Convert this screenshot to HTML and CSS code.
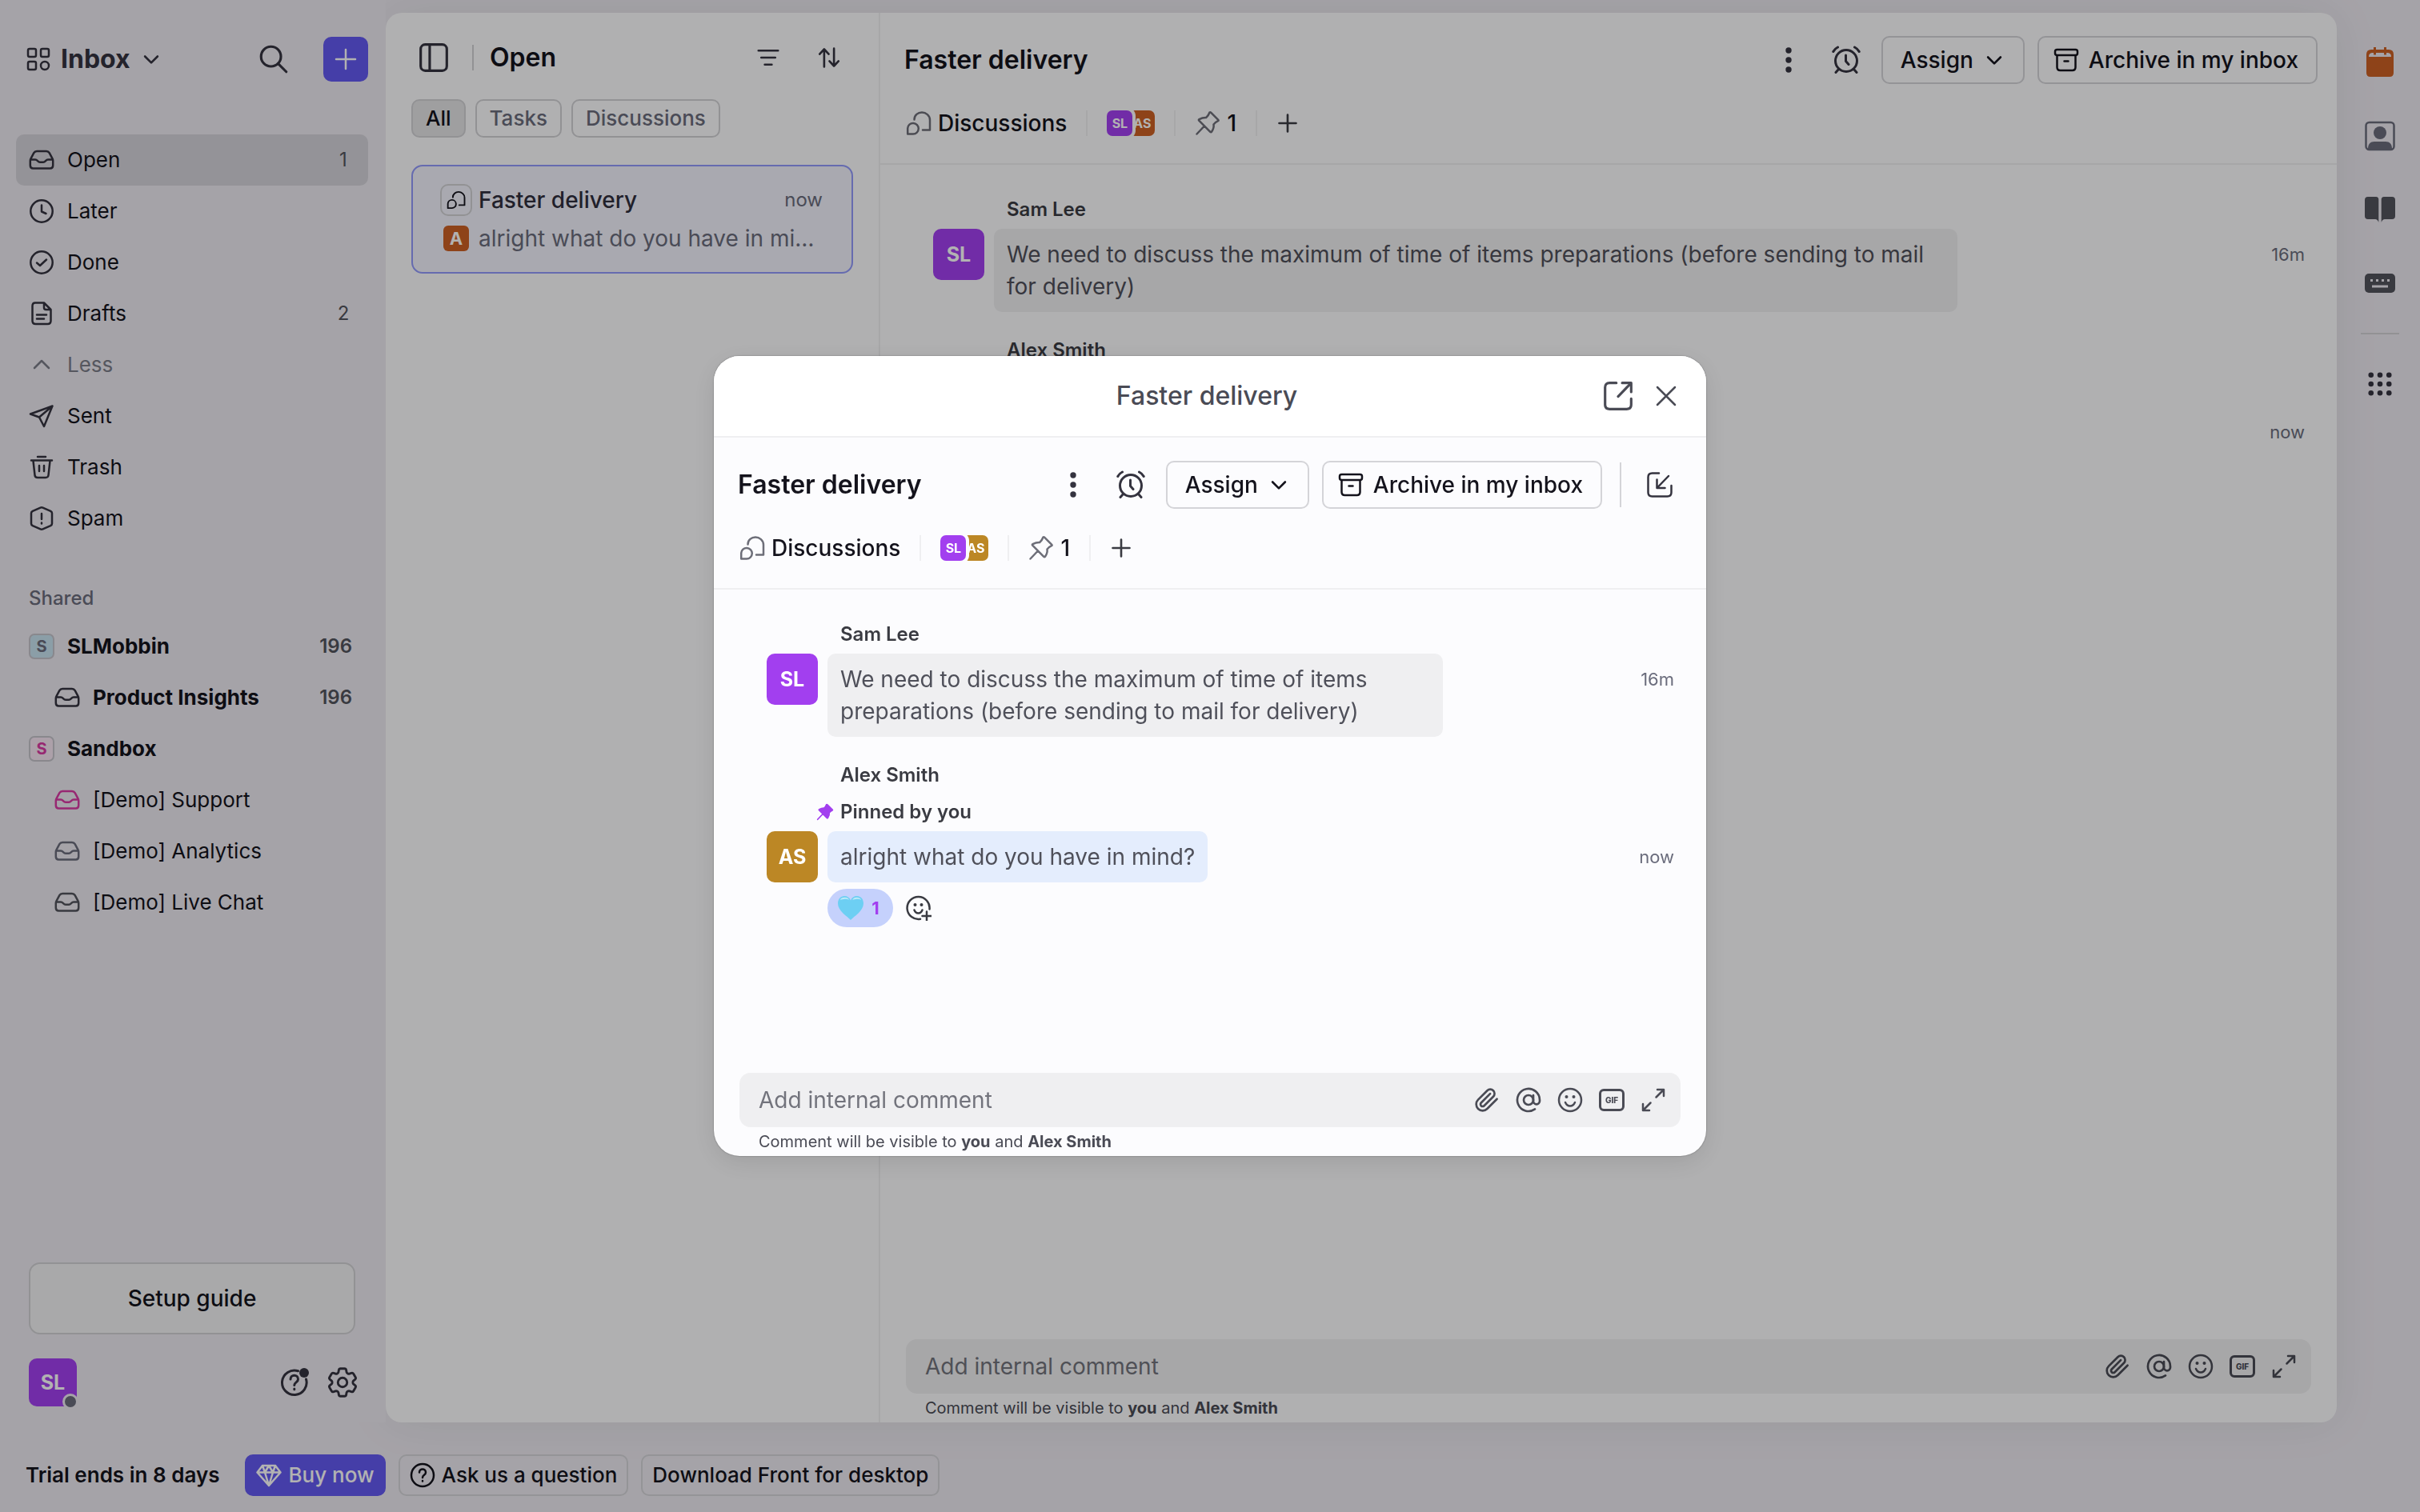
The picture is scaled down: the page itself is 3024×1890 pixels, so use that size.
FILE: index.html
```html
<!DOCTYPE html>
<html lang="en">
<head>
    <meta charset="UTF-8">
    <meta name="viewport" content="width=device-width, initial-scale=1.0">
    <title>Faster delivery</title>
    <link rel="stylesheet" href="styles.css">
</head>
<body>
    <!-- icon sprite -->
    <svg class="sprite" aria-hidden="true">
        <symbol id="i-apps" viewBox="0 0 32 32"><rect x="3" y="3" width="10" height="10" rx="2"/><rect x="19" y="3" width="10" height="10" rx="2"/><rect x="3" y="19" width="10" height="10" rx="2"/><circle cx="24" cy="24" r="5"/></symbol>
        <symbol id="i-down" viewBox="0 0 32 32"><path d="M7 12l9 9 9-9"/></symbol>
        <symbol id="i-up" viewBox="0 0 32 32"><path d="M7 20l9-9 9 9"/></symbol>
        <symbol id="i-search" viewBox="0 0 32 32"><circle cx="13" cy="13" r="11"/><path d="M21 21l9 9"/></symbol>
        <symbol id="i-plus" viewBox="0 0 32 32"><path d="M16 4v24M4 16h24"/></symbol>
        <symbol id="i-inbox" viewBox="0 0 32 32"><path d="M10 5h12q2.500 0 3.700 2.200l3.600 6.600q.9 1.600.9 3v6q0 3.700-3.500 3.700H5.300q-3.500 0-3.500-3.700v-6q0-1.400.9-3l3.600-6.600Q7.500 5 10 5zM2 15.500h6c3 0 3 3.200 6 3.200h4c3 0 3-3.200 6-3.200h6"/></symbol>
        <symbol id="i-clock" viewBox="0 0 32 32"><circle cx="16" cy="16" r="13.700"/><path d="M16 8.500V16.500l5.500 2.500"/></symbol>
        <symbol id="i-check" viewBox="0 0 32 32"><circle cx="16" cy="16" r="13.700"/><path d="M10 16.500l4 3.500 8-7.500"/></symbol>
        <symbol id="i-draft" viewBox="0 0 32 32"><path d="M8 2.500h11l8.500 8.500v14q0 4-4 4h-15q-4 0-4-4v-18.500q0-4 3.500-4zM19 3v5.500q0 2.500 2.500 2.500H27M10 17.500h12M10 22.500h9"/></symbol>
        <symbol id="i-send" viewBox="0 0 32 32"><path d="M2 13.500L29.500 3.500 19 29l-6-11.500zM13 17.500L29.500 3.500"/></symbol>
        <symbol id="i-trash" viewBox="0 0 32 32"><path d="M11 3h10M3 7.500h26M5.500 8l2 18q.3 3 3.500 3h10q3.200 0 3.500-3l2-18M13 14v7M19 14v7"/></symbol>
        <symbol id="i-spam" viewBox="0 0 32 32"><path d="M14.500 2.600q1.500-.7 3 0l9.700 4.300q1.800.9 1.800 2.600v13q0 1.700-1.800 2.600l-9.700 4.300q-1.500.7-3 0l-9.700-4.300Q3 24.200 3 22.500v-13q0-1.700 1.800-2.600zM16 10v7M16 21.500v1"/></symbol>
        <symbol id="i-panel" viewBox="0 0 32 32"><rect x="1.500" y="1.500" width="29" height="29" rx="5"/><path d="M11.500 2v28"/></symbol>
        <symbol id="i-filter" viewBox="0 0 32 32"><path d="M2 6h28M6 16h20M11 26h10"/></symbol>
        <symbol id="i-sort" viewBox="0 0 32 32"><path d="M9 29V4M2.500 11L9 4l6.500 7M23 3v25M16.500 21l6.500 7 6.500-7"/></symbol>
        <symbol id="i-chat" viewBox="0 0 32 32"><path d="M10.500 11.500C10.500 6 15 2.500 20 2.500S30 6.500 30 12v12.500h-9M2.200 29.500V22.300a6.800 6.800 0 1 1 6.800 7.200z"/></symbol>
        <symbol id="i-dots" viewBox="0 0 32 32"><g class="solid"><circle cx="16" cy="4" r="3.700"/><circle cx="16" cy="16" r="3.700"/><circle cx="16" cy="28" r="3.700"/></g></symbol>
        <symbol id="i-alarm" viewBox="0 0 36 36"><circle cx="18" cy="19" r="13.500"/><path d="M17.500 12v7.500l3.500 4M8.500 29.500L5 33.500M27.500 29.500l3.500 4M1.800 7.500Q3.500 4 7.500 2M34.200 7.500Q32.500 4 28.500 2"/></symbol>
        <symbol id="i-archive" viewBox="0 0 32 32"><rect x="2" y="3" width="28" height="7" rx="2.500"/><path d="M4.500 10.500V25q0 4 4 4h15q4 0 4-4V10.500M13.500 17.500h5"/></symbol>
        <symbol id="i-pin" viewBox="0 0 32 32"><path d="M18.500 2.500q.8-.6 1.600.2l9.200 9.200q.8.800-.3 1.300-3.500 1.800-5.500 4.300.8 4.500-2.500 9.200-.8 1-1.700.1L5.200 12.700q-.8-.9.300-1.600 4.200-2.400 8.700-2.200 2.800-2.200 4.300-6.400zM11.500 20L2.500 29.500"/></symbol>
        <symbol id="i-open" viewBox="0 0 32 32"><path d="M14 1.500H6.500Q1.500 1.500 1.500 6.500v19q0 5 5 5h19q5 0 5-5V19M20.500 1.500h10v10M30 2L16 16.500"/></symbol>
        <symbol id="i-close" viewBox="0 0 32 32"><path d="M5 5l22 22M27 5L5 27"/></symbol>
        <symbol id="i-pull" viewBox="0 0 32 32"><path d="M15 1.500H6.500q-5 0-5 5v19q0 5 5 5h19q5 0 5-5V17M27 5L13 19.500M12.500 9.500v10.500h10"/></symbol>
        <symbol id="i-clip" viewBox="0 0 24 24"><path d="m21.440 11.050-9.190 9.190a6 6 0 0 1-8.490-8.490l8.570-8.570A4 4 0 1 1 18 8.840l-8.590 8.570a2 2 0 0 1-2.830-2.830l8.490-8.480"/></symbol>
        <symbol id="i-at" viewBox="0 0 24 24"><circle cx="12" cy="12" r="4.500"/><path d="M16.500 7.500v5.500a2.800 2.800 0 0 0 6 0v-1a10.500 10.500 0 1 0-4.500 8.600"/></symbol>
        <symbol id="i-smile" viewBox="0 0 32 32"><circle cx="16" cy="16" r="14"/><path d="M10 19q2 4.500 6 4.500t6-4.500"/><g class="solid"><circle cx="11.500" cy="12" r="2"/><circle cx="20.500" cy="12" r="2"/></g></symbol>
        <symbol id="i-expand" viewBox="0 0 32 32"><path d="M21 3h8v8M29 3l-9.500 9.500M3 21v8h8M3 29l9.500-9.500"/></symbol>
        <symbol id="i-react" viewBox="0 0 32 32"><path d="M29.500 17.500A14 14 0 1 0 18 29.800M10.500 18.500q1.500 4 5 4t5-4M26 20.500v11M20.500 26h11"/><g class="solid"><circle cx="11.500" cy="12" r="2"/><circle cx="19.500" cy="12" r="2"/></g></symbol>
        <symbol id="i-heart" viewBox="1 1 30 28"><path fill="#6dcff3" d="M16 29C12 24.500 1 18.500 1 9.500 1 4.500 4.500 1 8.700 1 12 1 14.700 2.800 16 6c1.300-3.200 4-5 7.300-5C27.500 1 31 4.500 31 9.500c0 9-11 15-15 19.500z"/><path fill="#bfeaf8" d="M3.500 5.500Q5 2.500 9 2.500t5 3q-2.500-1.500-5-1t-5.500 1zM18 5.500q1.500-3 5-3t5.500 3q-3-1.500-5.500-1t-5 1z"/></symbol>
        <symbol id="i-help" viewBox="0 0 32 32"><circle cx="16" cy="16" r="14"/><path d="M12 12.500c0-5.500 8-5.500 8 0 0 3.500-4 3.200-4 6.500M16 23v.5"/></symbol>
        <symbol id="i-help-dot" viewBox="0 0 36 36"><path d="M22.500 3.700A15.300 15.300 0 1 0 32.500 14M13 14c0-6.500 9.500-6.500 9.500 0 0 4-4.700 3.700-4.700 7.500M17.800 26v.7"/><circle class="solid" cx="30" cy="6" r="6"/></symbol>
        <symbol id="i-gear" viewBox="0 0 24 24"><circle cx="12" cy="12" r="3"/><path d="M9.594 3.940c.090-.542.560-.940 1.110-.940h2.593c.550 0 1.020.398 1.110.940l.213 1.281c.063.374.313.686.645.870.074.040.147.083.220.127.325.196.720.257 1.075.124l1.217-.456a1.125 1.125 0 0 1 1.370.490l1.296 2.247a1.125 1.125 0 0 1-.260 1.431l-1.003.827c-.293.241-.438.613-.430.992a7.723 7.723 0 0 1 0 .255c-.008.378.137.750.430.991l1.004.827c.424.350.534.955.260 1.430l-1.298 2.247a1.125 1.125 0 0 1-1.369.491l-1.217-.456c-.355-.133-.750-.072-1.076.124a6.470 6.470 0 0 1-.220.128c-.331.183-.581.495-.644.869l-.213 1.281c-.090.543-.560.940-1.110.940h-2.594c-.550 0-1.019-.398-1.110-.940l-.213-1.281c-.062-.374-.312-.686-.644-.870a6.520 6.520 0 0 1-.220-.127c-.325-.196-.720-.257-1.076-.124l-1.217.456a1.125 1.125 0 0 1-1.369-.490l-1.297-2.247a1.125 1.125 0 0 1 .260-1.431l1.004-.827c.292-.240.437-.613.430-.991a6.932 6.932 0 0 1 0-.255c.007-.380-.138-.751-.430-.992l-1.004-.827a1.125 1.125 0 0 1-.260-1.430l1.297-2.247a1.125 1.125 0 0 1 1.370-.491l1.216.456c.356.133.751.072 1.076-.124.072-.044.146-.086.220-.128.332-.183.582-.495.644-.869z"/></symbol>
        <symbol id="i-gem" viewBox="0 0 32 32"><path d="M8 4h16l6.500 8.500L16 29 1.500 12.500zM1.500 12.500h29M8 4l3 8.500L16 29l5-16.500L24 4M11 12.500L16 4l5 8.500"/></symbol>
        <symbol id="i-calendar" viewBox="0 0 38 38"><path class="solid" d="M8 3h3V0h3v3h10V0h3v3h3q6 0 6 6v23q0 5-5 5H7q-5 0-5-5V9q0-6 6-6z"/><path class="hole" d="M5 12q0-5 5-5h1v2.500h3V7h10v2.500h3V7h1q5 0 5 5z"/></symbol>
        <symbol id="i-contact" viewBox="0 0 38 38"><rect x="1.500" y="2" width="35" height="34" rx="4"/><g class="solid"><circle cx="19" cy="15" r="8"/><path d="M4 35c0-6 3-9 8-9h14c5 0 8 3 8 9z"/></g></symbol>
        <symbol id="i-book" viewBox="0 0 38 38"><path class="solid" d="M4 3h10q3.300 0 3.300 3.500V35Q16 31 13 31H4q-4 0-4-4V7q0-4 4-4zM34 3H24q-3.300 0-3.300 3.500V35Q22 31 25 31h9q4 0 4-4V7q0-4-4-4z"/></symbol>
        <symbol id="i-keyboard" viewBox="0 0 38 38"><rect class="solid" y="7" width="38" height="24" rx="5"/><path class="hole" d="M7 14h3v3H7zM14 14h3v3h-3zM21 14h3v3h-3zM28 14h3v3h-3zM9 21.500h20v3H9z"/></symbol>
        <symbol id="i-grid" viewBox="0 0 32 32"><g class="solid"><circle cx="4" cy="4" r="3.500"/><circle cx="16" cy="4" r="3.500"/><circle cx="28" cy="4" r="3.500"/><circle cx="4" cy="16" r="3.500"/><circle cx="16" cy="16" r="3.500"/><circle cx="28" cy="16" r="3.500"/><circle cx="4" cy="28" r="3.500"/><circle cx="16" cy="28" r="3.500"/><circle cx="28" cy="28" r="3.500"/></g></symbol>
    </svg>

    <div class="app">
        <!-- sidebar -->
        <aside class="sidebar">
            <div class="sidebar-head">
                <button class="switcher"><svg class="icon"><use href="#i-apps"/></svg>Inbox<svg class="icon icon-sm"><use href="#i-down"/></svg></button>
                <button class="icon-btn" aria-label="Search"><svg class="icon icon-lg"><use href="#i-search"/></svg></button>
                <button class="compose" aria-label="Compose"><svg class="icon"><use href="#i-plus"/></svg></button>
            </div>
            <nav class="nav">
                <a class="nav-item active" href="#"><svg class="icon"><use href="#i-inbox"/></svg>Open<span class="count">1</span></a>
                <a class="nav-item" href="#"><svg class="icon"><use href="#i-clock"/></svg>Later</a>
                <a class="nav-item" href="#"><svg class="icon"><use href="#i-check"/></svg>Done</a>
                <a class="nav-item" href="#"><svg class="icon"><use href="#i-draft"/></svg>Drafts<span class="count">2</span></a>
                <button class="nav-item less"><svg class="icon"><use href="#i-up"/></svg>Less</button>
                <a class="nav-item" href="#"><svg class="icon"><use href="#i-send"/></svg>Sent</a>
                <a class="nav-item" href="#"><svg class="icon"><use href="#i-trash"/></svg>Trash</a>
                <a class="nav-item" href="#"><svg class="icon"><use href="#i-spam"/></svg>Spam</a>
                <h2 class="nav-label">Shared</h2>
                <a class="nav-item strong" href="#"><span class="badge badge-blue">S</span>SLMobbin<span class="count">196</span></a>
                <a class="nav-item strong child" href="#"><svg class="icon"><use href="#i-inbox"/></svg>Product Insights<span class="count">196</span></a>
                <a class="nav-item strong" href="#"><span class="badge badge-pink">S</span>Sandbox</a>
                <a class="nav-item child" href="#"><svg class="icon pink"><use href="#i-inbox"/></svg>[Demo] Support</a>
                <a class="nav-item child" href="#"><svg class="icon slate"><use href="#i-inbox"/></svg>[Demo] Analytics</a>
                <a class="nav-item child" href="#"><svg class="icon gray"><use href="#i-inbox"/></svg>[Demo] Live Chat</a>
            </nav>
            <div class="sidebar-foot">
                <button class="setup">Setup guide</button>
                <div class="account">
                    <span class="avatar avatar-me">SL<i class="status"></i></span>
                    <button class="icon-btn foot-btn" aria-label="Help"><svg class="icon icon-xl"><use href="#i-help-dot"/></svg></button>
                    <button class="icon-btn foot-btn" aria-label="Settings"><svg class="icon icon-gear"><use href="#i-gear"/></svg></button>
                </div>
            </div>
        </aside>

        <main class="panel">
            <!-- conversation list -->
            <section class="list">
                <div class="list-head">
                    <button class="icon-btn" aria-label="Toggle sidebar"><svg class="icon icon-lg"><use href="#i-panel"/></svg></button>
                    <h1 class="list-title">Open</h1>
                    <button class="icon-btn" aria-label="Filter"><svg class="icon"><use href="#i-filter"/></svg></button>
                    <button class="icon-btn" aria-label="Sort"><svg class="icon"><use href="#i-sort"/></svg></button>
                </div>
                <div class="tabs">
                    <button class="tab active">All</button>
                    <button class="tab">Tasks</button>
                    <button class="tab">Discussions</button>
                </div>
                <a class="card" href="#">
                    <span class="card-icon"><svg class="icon icon-xs"><use href="#i-chat"/></svg></span>
                    <span class="card-title">Faster delivery</span>
                    <time class="card-time">now</time>
                    <span class="avatar avatar-letter orange">A</span>
                    <span class="card-text">alright what do you have in mind?</span>
                </a>
            </section>

            <!-- conversation -->
            <section class="conversation">
                <header class="conv-head">
                    <div class="conv-row">
                        <h2 class="conv-title">Faster delivery</h2>
                        <button class="icon-btn" aria-label="More"><svg class="icon"><use href="#i-dots"/></svg></button>
                        <button class="icon-btn" aria-label="Snooze"><svg class="icon icon-xl"><use href="#i-alarm"/></svg></button>
                        <button class="btn">Assign<svg class="icon icon-sm"><use href="#i-down"/></svg></button>
                        <button class="btn btn-archive"><svg class="icon"><use href="#i-archive"/></svg>Archive in my inbox</button>
                    </div>
                    <div class="conv-meta">
                        <button class="meta-item"><svg class="icon"><use href="#i-chat"/></svg>Discussions</button>
                        <span class="meta-item avatars"><span class="avatar avatar-sm front">SL</span><span class="avatar avatar-sm orange">AS</span></span>
                        <button class="meta-item"><svg class="icon"><use href="#i-pin"/></svg>1</button>
                        <button class="meta-item" aria-label="Add"><svg class="icon dark"><use href="#i-plus"/></svg></button>
                    </div>
                </header>
                <div class="thread">
                    <article class="message">
                        <h3 class="author">Sam Lee</h3>
                        <span class="avatar">SL</span>
                        <p class="bubble">We need to discuss the maximum of time of items preparations (before sending to mail for delivery)</p>
                        <time>16m</time>
                    </article>
                    <article class="message">
                        <h3 class="author">Alex Smith</h3>
                        <p class="pinned"><svg class="icon"><use href="#i-pin"/></svg>Pinned by you</p>
                        <span class="avatar orange">AS</span>
                        <p class="bubble blue">alright what do you have in mind?</p>
                        <time>now</time>
                    </article>
                </div>
                <footer class="composer">
                    <div class="composer-box">
                        <input type="text" aria-label="Internal comment" placeholder="Add internal comment">
                        <button aria-label="Attach file"><svg class="icon"><use href="#i-clip"/></svg></button>
                        <button aria-label="Mention"><svg class="icon"><use href="#i-at"/></svg></button>
                        <button aria-label="Emoji"><svg class="icon"><use href="#i-smile"/></svg></button>
                        <button class="gif">GIF</button>
                        <button aria-label="Expand"><svg class="icon"><use href="#i-expand"/></svg></button>
                    </div>
                    <p class="composer-note">Comment will be visible to <b>you</b> and <b>Alex Smith</b></p>
                </footer>
            </section>
        </main>

        <!-- plugin rail -->
        <aside class="rail">
            <button aria-label="Calendar"><svg class="icon rail-calendar"><use href="#i-calendar"/></svg></button>
            <button aria-label="Contacts"><svg class="icon slate"><use href="#i-contact"/></svg></button>
            <button aria-label="Knowledge base"><svg class="icon"><use href="#i-book"/></svg></button>
            <button aria-label="Shortcuts"><svg class="icon"><use href="#i-keyboard"/></svg></button>
            <hr>
            <button aria-label="All plugins"><svg class="icon rail-grid"><use href="#i-grid"/></svg></button>
        </aside>

        <!-- trial bar -->
        <footer class="trial">
            <span class="trial-text">Trial ends in 8 days</span>
            <button class="btn btn-sm primary"><svg class="icon"><use href="#i-gem"/></svg>Buy now</button>
            <button class="btn btn-sm"><svg class="icon"><use href="#i-help"/></svg>Ask us a question</button>
            <button class="btn btn-sm">Download Front for desktop</button>
        </footer>
    </div>

    <!-- popup -->
    <div class="overlay">
        <div class="modal" role="dialog" aria-labelledby="modal-title">
            <div class="modal-head">
                <h2 class="modal-title" id="modal-title">Faster delivery</h2>
                <button class="icon-btn" aria-label="Open in new window"><svg class="icon icon-lg"><use href="#i-open"/></svg></button>
                <button class="icon-btn" aria-label="Close"><svg class="icon"><use href="#i-close"/></svg></button>
            </div>
            <section class="conversation">
                <header class="conv-head">
                    <div class="conv-row">
                        <h2 class="conv-title">Faster delivery</h2>
                        <button class="icon-btn" aria-label="More"><svg class="icon"><use href="#i-dots"/></svg></button>
                        <button class="icon-btn" aria-label="Snooze"><svg class="icon icon-xl"><use href="#i-alarm"/></svg></button>
                        <button class="btn">Assign<svg class="icon icon-sm"><use href="#i-down"/></svg></button>
                        <button class="btn btn-archive"><svg class="icon"><use href="#i-archive"/></svg>Archive in my inbox</button>
                        <span class="pull"><button class="icon-btn" aria-label="Move to main window"><svg class="icon"><use href="#i-pull"/></svg></button></span>
                    </div>
                    <div class="conv-meta">
                        <button class="meta-item"><svg class="icon"><use href="#i-chat"/></svg>Discussions</button>
                        <span class="meta-item avatars"><span class="avatar avatar-sm front">SL</span><span class="avatar avatar-sm gold">AS</span></span>
                        <button class="meta-item"><svg class="icon"><use href="#i-pin"/></svg>1</button>
                        <button class="meta-item" aria-label="Add"><svg class="icon dark"><use href="#i-plus"/></svg></button>
                    </div>
                </header>
                <div class="thread">
                    <article class="message">
                        <h3 class="author">Sam Lee</h3>
                        <span class="avatar">SL</span>
                        <p class="bubble">We need to discuss the maximum of time of items preparations (before sending to mail for delivery)</p>
                        <time>16m</time>
                    </article>
                    <article class="message">
                        <h3 class="author">Alex Smith</h3>
                        <p class="pinned"><svg class="icon"><use href="#i-pin"/></svg>Pinned by you</p>
                        <span class="avatar gold">AS</span>
                        <p class="bubble blue">alright what do you have in mind?</p>
                        <time>now</time>
                        <div class="reactions">
                            <button class="reaction"><svg class="heart"><use href="#i-heart"/></svg>1</button>
                            <button class="react" aria-label="Add reaction"><svg class="icon"><use href="#i-react"/></svg></button>
                        </div>
                    </article>
                </div>
                <footer class="composer">
                    <div class="composer-box">
                        <input type="text" aria-label="Internal comment" placeholder="Add internal comment">
                        <button aria-label="Attach file"><svg class="icon"><use href="#i-clip"/></svg></button>
                        <button aria-label="Mention"><svg class="icon"><use href="#i-at"/></svg></button>
                        <button aria-label="Emoji"><svg class="icon"><use href="#i-smile"/></svg></button>
                        <button class="gif">GIF</button>
                        <button aria-label="Expand"><svg class="icon"><use href="#i-expand"/></svg></button>
                    </div>
                    <p class="composer-note">Comment will be visible to <b>you</b> and <b>Alex Smith</b></p>
                </footer>
            </section>
        </div>
    </div>
</body>
</html>
```
FILE: styles.css
```css
* {
    box-sizing: border-box;
    margin: 0;
}
body {
    font-family: Inter, "Liberation Sans", sans-serif;
    font-size: 28px;
    line-height: 40px;
    color: #14131c;
    background: #edeaf1;
}
button, input {
    font: inherit;
    color: inherit;
    background: none;
    border: none;
    padding: 0;
}
button {
    display: flex;
    align-items: center;
    justify-content: center;
    cursor: pointer;
}
a {
    color: inherit;
    text-decoration: none;
}
.sprite {
    position: absolute;
    width: 0;
    height: 0;
}

/* icons */
.icon {
    width: 32px;
    height: 32px;
    flex: none;
    fill: none;
    stroke: currentColor;
    stroke-width: 2.5;
    stroke-linecap: round;
    stroke-linejoin: round;
}
.icon-xs { width: 24px; height: 24px; }
.icon-sm { width: 28px; height: 28px; stroke-width: 3; }
.icon-lg { width: 36px; height: 36px; stroke-width: 2.8; }
.icon-xl { width: 36px; height: 36px; stroke-width: 3; }
.icon-gear { width: 46px; height: 46px; stroke-width: 1.5; }
.solid {
    fill: currentColor;
    stroke: none;
}
.hole {
    fill: #edeaf1;
    stroke: none;
}
.pink { color: #d93aa4; }
.slate { color: #6a6c7c; }
.gray { color: #52535c; }
.dark { color: #3a3b42; }
.icon-btn {
    width: 56px;
    height: 56px;
    flex: none;
    color: #34333f;
}

.app {
    display: grid;
    grid-template-columns: 482px 1fr 104px;
    grid-template-rows: 1fr auto;
    min-height: 100vh;
}

/* sidebar */
.sidebar {
    display: flex;
    flex-direction: column;
    padding: 46px 22px 20px 20px;
    background: #edeaf1;
    z-index: 1;
}
.sidebar-head {
    display: flex;
    align-items: center;
    gap: 34px;
    margin-bottom: 66px;
}
.switcher {
    gap: 12px;
    margin-right: auto;
    padding-left: 12px;
    font-size: 32px;
    font-weight: 700;
    color: #34333f;
}
.compose {
    width: 56px;
    height: 56px;
    border-radius: 10px;
    background: #645af1;
    color: #fff;
}
.nav-item {
    display: flex;
    align-items: center;
    justify-content: flex-start;
    gap: 16px;
    width: 100%;
    height: 64px;
    padding: 0 20px 0 16px;
    border-radius: 10px;
    font-size: 26px;
}
.nav-item .icon:not(.pink):not(.slate):not(.gray) { color: #34333f; }
.nav-item.active { background: #d5d3da; }
.nav-item.strong { font-weight: 700; }
.nav-item.child { padding-left: 48px; }
.nav-item .count { color: #52535c; }
.nav-item.less,
.nav-item.less .icon:not(.pink):not(.slate):not(.gray) { color: #7b7d89; }
.count {
    min-width: 22px;
    margin-left: auto;
    font-size: 24px;
    text-align: center;
}
.strong .count { font-weight: 600; }
.nav-label {
    margin-top: 40px;
    padding-left: 16px;
    font-size: 24px;
    font-weight: 500;
    line-height: 56px;
    color: #6a6c7c;
}
.badge {
    width: 32px;
    height: 32px;
    border: 2px solid #c4c3ca;
    border-radius: 7px;
    font-size: 20px;
    font-weight: 700;
    line-height: 28px;
    text-align: center;
}
.badge-blue { background: #c8e2ef; color: #6a6c7c; }
.badge-pink { background: #f7e6f2; color: #d93aa4; }
.sidebar-foot {
    display: flex;
    flex-direction: column;
    gap: 30px;
    margin-top: auto;
    padding: 0 16px;
}
.setup {
    height: 90px;
    border: 2px solid #d2d2d5;
    border-radius: 14px;
    background: #f3f3f4;
    font-weight: 500;
}
.account {
    display: flex;
    align-items: center;
    gap: 28px;
}
.foot-btn { width: 32px; }
.avatar {
    display: flex;
    align-items: center;
    justify-content: center;
    width: 64px;
    height: 64px;
    flex: none;
    border-radius: 10px;
    background: #a23fef;
    color: #fff;
    font-size: 25px;
    font-weight: 700;
    line-height: 1;
}
.orange { background: #cc6025; }
.gold { background: #bc8725; }
.avatar-me {
    position: relative;
    width: 60px;
    height: 60px;
    margin-right: auto;
}
.status {
    position: absolute;
    right: -2px;
    bottom: -4px;
    width: 20px;
    height: 20px;
    border: 3px solid #edeaf1;
    border-radius: 50%;
    background: #6a6c7c;
}
.avatar-sm {
    width: 32px;
    height: 32px;
    border-radius: 7px;
    font-size: 16px;
}
.avatar-letter {
    width: 32px;
    height: 32px;
    border-radius: 6px;
    font-size: 22px;
}

/* main panel */
.panel {
    display: grid;
    grid-template-columns: 618px 1fr;
    margin-top: 16px;
    border-radius: 20px;
    background: #fcfcfe;
    box-shadow: 0 0 60px rgba(30, 40, 20, .07);
}
.list {
    padding: 28px 32px 0;
    border-right: 2px solid #efeff1;
}
.list-head {
    display: flex;
    align-items: center;
    gap: 20px;
    padding: 0 2px 0 10px;
}
.list-head .icon-btn:first-child {
    width: 46px;
    justify-content: flex-start;
}
.list-title {
    margin-right: auto;
    padding-left: 20px;
    border-left: 2px solid #d2d2d5;
    font-size: 32px;
    font-weight: 600;
    line-height: 32px;
}
.list-head .icon:not(.icon-lg) {
    width: 28px;
    height: 28px;
    stroke-width: 3;
}
.tabs {
    display: flex;
    gap: 12px;
    margin-top: 24px;
}
.tab {
    height: 48px;
    padding: 0 16px;
    border: 2px solid #d2d2d5;
    border-radius: 10px;
    font-size: 26px;
    font-weight: 500;
    color: #6a6c7c;
}
.tab.active {
    background: #e4e4e6;
    color: #14131c;
}
.card {
    display: grid;
    grid-template-columns: 40px 1fr auto;
    align-items: center;
    justify-items: center;
    column-gap: 8px;
    row-gap: 8px;
    margin-top: 34px;
    padding: 22px 36px 22px 34px;
    border: 2px solid #929afb;
    border-radius: 14px;
    background: #f2f3fd;
}
.card-icon {
    display: flex;
    align-items: center;
    justify-content: center;
    width: 40px;
    height: 40px;
    border: 2px solid #d2d2d5;
    border-radius: 10px;
}
.card-title {
    justify-self: start;
    font-weight: 500;
    color: #302f3d;
}
.card-time {
    font-size: 24px;
    color: #6a6c7c;
}
.card-text {
    grid-column: 2 / 4;
    justify-self: stretch;
    overflow: hidden;
    white-space: nowrap;
    text-overflow: ellipsis;
    color: #6a6c7c;
}

/* conversation */
.conversation {
    display: flex;
    flex-direction: column;
    flex: 1;
    min-width: 0;
}
.conv-head {
    display: flex;
    flex-direction: column;
    gap: 25px;
    padding: 29px 24px 26px 30px;
    border-bottom: 2px solid #efeff1;
}
.conv-row {
    display: flex;
    align-items: center;
    gap: 16px;
}
.conv-title {
    margin-right: auto;
    font-size: 32px;
    font-weight: 600;
}
.btn {
    gap: 12px;
    height: 60px;
    padding: 0 22px;
    border: 2px solid #d4d4d8;
    border-radius: 10px;
    font-weight: 500;
    white-space: nowrap;
}
.btn-archive { padding: 0 22px 0 18px; }
.pull {
    display: flex;
    align-items: center;
    margin: 0 6px;
    padding-left: 20px;
    border-left: 2px solid #d4d4d8;
}
.conv-meta {
    display: flex;
    align-items: center;
    height: 48px;
    padding-left: 2px;
}
.meta-item {
    display: flex;
    align-items: center;
    gap: 8px;
    height: 32px;
    padding: 0 24px;
    border-left: 2px solid #efeff1;
    font-weight: 500;
}
.meta-item:first-child {
    padding-left: 0;
    border-left: none;
}
.meta-item .icon:not(.dark) { color: #6d6e78; }
.meta-item .dark { width: 28px; height: 28px; stroke-width: 3; }
.avatars { gap: 0; }
.front {
    z-index: 1;
    box-shadow: 0 0 0 4px #fcfcfe;
}
.avatars .avatar + .avatar { margin-left: -4px; }
.thread {
    display: flex;
    flex-direction: column;
    gap: 32px;
    flex: 1;
    padding: 40px 40px 32px 66px;
}
.message {
    display: grid;
    grid-template-columns: 64px 1fr 48px;
    column-gap: 12px;
    color: #4f505a;
}
.author, .pinned {
    grid-column: 2;
    padding-left: 16px;
    margin-bottom: 8px;
    font-size: 24px;
    font-weight: 600;
    line-height: 32px;
    color: #3a3b42;
}
/* pin hangs to the left of the bubble text */
.pinned {
    display: flex;
    align-items: center;
    gap: 8px;
    margin-top: 6px;
    margin-left: -14px;
    padding-left: 0;
}
.pinned .icon {
    width: 22px;
    height: 22px;
    color: #a23fef;
    fill: currentColor;
}
.message .avatar { grid-column: 1; }
.bubble {
    justify-self: start;
    max-width: calc(75% + 20px);
    padding: 12px 16px;
    border-radius: 10px;
    background: #efeff1;
}
.bubble.blue { background: #e4edfd; }
.message time {
    justify-self: end;
    font-size: 22px;
    line-height: 64px;
    color: #6a6c7c;
}
.reactions {
    display: flex;
    grid-column: 2;
    align-items: center;
    gap: 16px;
    margin-top: 8px;
}
.reaction {
    gap: 10px;
    width: 82px;
    height: 48px;
    padding-right: 4px;
    border-radius: 24px;
    background: #c5d1fc;
    color: #a23fef;
    font-size: 22px;
    font-weight: 700;
}
.heart {
    width: 32px;
    height: 30px;
    flex: none;
}
.react { color: #3a3b42; }
.composer { padding: 0 32px; }
.composer-box {
    display: flex;
    align-items: center;
    gap: 20px;
    height: 68px;
    padding: 0 18px 0 24px;
    border-radius: 14px;
    background: #efeff1;
    color: #4a4b55;
}
.composer-box input {
    flex: 1;
    min-width: 0;
}
.composer-box input::placeholder {
    color: #72737c;
    opacity: 1;
}
.composer-box use[href="#i-clip"],
.composer-box use[href="#i-at"] { stroke-width: 2; }
.gif {
    width: 32px;
    height: 28px;
    border: 3px solid currentColor;
    border-radius: 6px;
    font-size: 10px;
    font-weight: 800;
    line-height: 1;
}
.composer-note {
    padding-left: 24px;
    font-size: 20px;
    line-height: 36px;
    color: #4a4b55;
}
.composer-note b { font-weight: 700; }

/* plugin rail */
.rail {
    display: flex;
    flex-direction: column;
    align-items: center;
    padding: 54px 0 0 4px;
}
.rail button {
    height: 48px;
    margin-bottom: 44px;
    color: #52535c;
}
.rail .icon {
    width: 38px;
    height: 38px;
}
.rail .slate { color: #6a6c7c; }
.rail .rail-calendar { color: #cc6025; }
.rail .rail-grid {
    width: 30px;
    height: 30px;
    color: #34333f;
}
.rail hr {
    width: 48px;
    margin: -6px 0 38px;
    border: none;
    border-top: 2px solid #d2d2d5;
}

/* trial bar */
.trial {
    grid-column: 1 / 4;
    display: flex;
    align-items: center;
    gap: 16px;
    padding: 40px 32px 20px;
}
.trial-text {
    margin-right: 16px;
    font-size: 26px;
    font-weight: 600;
}
.btn-sm {
    gap: 8px;
    height: 52px;
    padding: 0 12px;
    font-size: 26px;
}
.primary {
    border-color: #645af1;
    background: #645af1;
    color: #fff;
}

/* popup */
.overlay {
    position: fixed;
    inset: 0;
    z-index: 2;
    display: flex;
    align-items: center;
    justify-content: center;
    background: rgba(0, 0, 0, .3);
}
.modal {
    display: flex;
    flex-direction: column;
    width: 100%;
    max-width: 1240px;
    min-height: 1000px;
    border-radius: 32px;
    background: #fcfcfe;
    box-shadow: 0 0 2px rgba(0, 0, 0, .4), 0 8px 32px rgba(0, 0, 0, .1);
}
.modal-head {
    display: flex;
    align-items: center;
    height: 102px;
    padding: 0 20px 0 134px;
    border-bottom: 2px solid #efeff1;
    border-radius: 32px 32px 0 0;
    background: #fff;
}
.modal-title {
    flex: 1;
    padding-right: 2px;
    font-size: 32px;
    font-weight: 500;
    text-align: center;
    color: #4a4b55;
}
.modal-head .icon-btn { width: 60px; color: #4a4b55; }
```
